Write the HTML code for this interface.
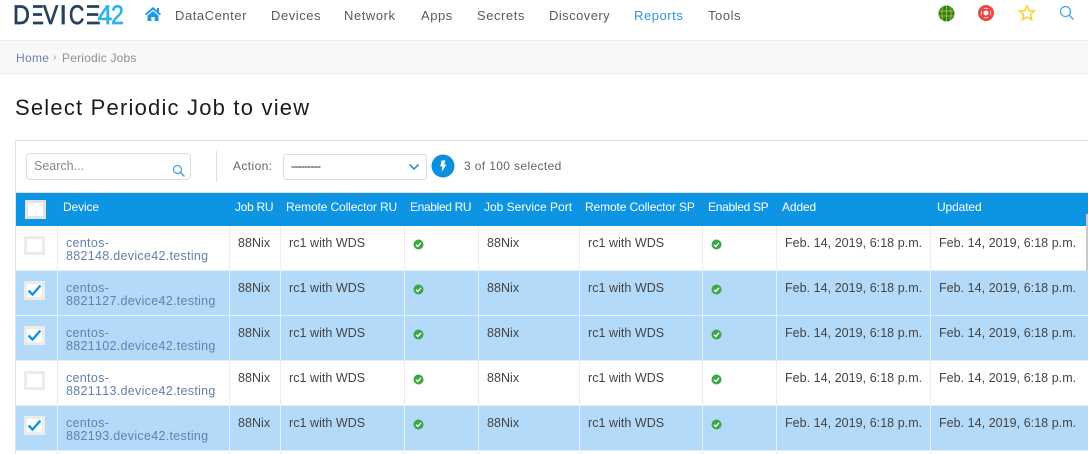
<!DOCTYPE html>
<html><head><meta charset="utf-8">
<style>
html,body{margin:0;padding:0;background:#fff;width:1088px;height:454px;overflow:hidden}
body{position:relative;font-family:"Liberation Sans",sans-serif;color:#444}
.a{position:absolute;white-space:nowrap}
.nav{top:8px;font-size:13px;line-height:15px;color:#5a5a5a;letter-spacing:.55px}
.l{position:absolute;top:0;font-size:26.5px;line-height:30px;color:#24425f;transform-origin:0 0;-webkit-text-stroke:.7px currentColor}
.w{position:absolute;top:2px;height:25px;background:#fff}
table{position:absolute;left:16px;top:193px;border-collapse:separate;border-spacing:0;table-layout:fixed;width:1072px;font-size:12.5px;font-kerning:none}
th{height:33px;padding:0 0 6px 6px;background:#0d95e3;color:#fff;font-weight:normal;text-align:left;font-size:12px;box-sizing:border-box;vertical-align:middle;white-space:nowrap;letter-spacing:-.12px}
td{height:45px;box-sizing:border-box;border-left:1px solid #ececec;border-bottom:1px solid #ececec;padding:11px 0 0 8px;vertical-align:top;line-height:13px;white-space:nowrap;letter-spacing:.04px}
tr.s td{background:#b3daf9;border-color:#e3eff9}
td:first-child{border-left:0;padding:0}
td.d{color:#6480ad;line-height:13px;letter-spacing:.3px}
.ok{display:block;margin-top:2px}
.v{position:absolute;top:451px;width:1px;height:3px;background:#ececec}
.cb{position:absolute;left:24px;width:15px;height:13px;border:3px solid #ececec;background:#fff}
</style></head><body>
<span class="l" style="left:28.400px;transform:scaleX(.9)">E</span>
<div class="w" style="left:29px;width:4px"></div>
<span class="l" style="left:13px;transform:scaleX(.88)">D</span>
<span class="l" style="left:43px;transform:scaleX(.86)">V</span>
<span class="l" style="left:59.500px">I</span>
<span class="l" style="left:80.900px;transform:scaleX(1.11)">E</span>
<div class="w" style="left:83px;width:3.500px"></div>
<span class="l" style="left:69px;transform:scaleX(.8)">C</span>
<span class="l" style="left:97.500px;color:#2cb5ea">4</span>
<span class="l" style="left:111.300px;color:#2cb5ea;transform:scaleX(.87)">2</span>
<svg class="a" style="left:145px;top:7px" width="16" height="14" viewBox="0 0 16 14"><path d="M8 0 L16 7 L14.800 8.400 L8 2.600 L1.200 8.400 L0 7 Z" fill="#2196e3"/><path d="M8 4 L13.500 8.600 V14 H9.700 V10 H6.300 V14 H2.500 V8.600 Z" fill="#2196e3"/><rect x="12" y="1" width="2" height="3.500" fill="#2196e3"/></svg>
<span class="a nav" style="left:175px">DataCenter</span>
<span class="a nav" style="left:271px">Devices</span>
<span class="a nav" style="left:344px">Network</span>
<span class="a nav" style="left:421px">Apps</span>
<span class="a nav" style="left:477px">Secrets</span>
<span class="a nav" style="left:549px;letter-spacing:.45px">Discovery</span>
<span class="a nav" style="left:634px;color:#2b97e0">Reports</span>
<span class="a nav" style="left:708px">Tools</span>
<svg class="a" style="left:938px;top:5px" width="17" height="17" viewBox="0 0 17 17"><circle cx="8.500" cy="8.500" r="8" fill="#0f8a2c"/><path d="M.5 6h16M.5 11h16M8.500.5v16M5 1.500c-1.500 4-1.500 10 0 14M12 1.500c1.500 4 1.500 10 0 14" stroke="#d8a51c" stroke-width="1" fill="none"/></svg>
<svg class="a" style="left:978px;top:5px" width="16" height="16" viewBox="0 0 16 16"><circle cx="8" cy="8" r="6.600" fill="none" stroke="#ee4444" stroke-width="2.800"/><circle cx="8" cy="8" r="3.500" fill="#fff" stroke="#ee4444" stroke-width="2"/><path d="M3.500 3.500L5.500 5.500M12.500 3.500L10.500 5.500M3.500 12.500L5.500 10.500M12.500 12.500L10.500 10.500" stroke="#ee4444" stroke-width="3"/></svg>
<svg class="a" style="left:1018px;top:4px" width="18" height="18" viewBox="0 0 18 18"><path d="M9 1.800L11.100 6.700L16.300 7.100L12.400 10.500L13.600 15.700L9 13L4.400 15.700L5.600 10.500L1.700 7.100L6.900 6.700Z" fill="none" stroke="#fbd431" stroke-width="1.600"/></svg>
<svg class="a" style="left:1059px;top:5px" width="16" height="16" viewBox="0 0 16 16"><circle cx="6.500" cy="6.500" r="5" fill="none" stroke="#4aa6ea" stroke-width="1.300"/><path d="M10 10L14.500 14.500" stroke="#4aa6ea" stroke-width="1.500"/></svg>

<div class="a" style="left:0;top:40px;width:1088px;height:34px;background:#f8f8f8;border-top:1px solid #ececec;border-bottom:1px solid #ececec;box-sizing:border-box"></div>
<div class="a" style="left:16px;top:51px;font-size:12px;line-height:14px;color:#6b7fae;letter-spacing:.3px">Home</div>
<div class="a" style="left:53px;top:51px;font-size:10px;line-height:14px;color:#999">›</div>
<div class="a" style="left:62px;top:51px;font-size:12px;line-height:14px;color:#8f8f8f;letter-spacing:.2px">Periodic Jobs</div>
<div class="a" style="left:15px;top:95px;font-size:22px;line-height:26px;color:#1c1c1c;letter-spacing:1.200px">Select Periodic Job to view</div>

<div class="a" style="left:15px;top:140px;width:1073px;height:314px;border-left:1px solid #e2e2e2;border-top:1px solid #e2e2e2;box-sizing:border-box"></div>
<div class="a" style="left:16px;top:192px;width:1072px;height:1px;background:#e2e2e2"></div>
<div class="a" style="left:26px;top:153px;width:165px;height:27px;border:1px solid #dcdcdc;border-radius:4px;box-sizing:border-box"></div>
<div class="a" style="left:34px;top:159px;font-size:12.500px;line-height:15px;color:#888;letter-spacing:0">Search...</div>
<svg class="a" style="left:172px;top:164px" width="14" height="14" viewBox="0 0 14 14"><circle cx="5.500" cy="5.500" r="4" fill="none" stroke="#3d9fe6" stroke-width="1.200"/><path d="M8.500 8.500L12.500 12.500" stroke="#3d9fe6" stroke-width="1.400"/></svg>
<div class="a" style="left:216px;top:151px;width:1px;height:31px;background:#ddd"></div>
<div class="a" style="left:233px;top:159px;font-size:12px;line-height:14px;color:#666;letter-spacing:.4px">Action:</div>
<div class="a" style="left:283px;top:154px;width:144px;height:26px;border:1px solid #dcdcdc;border-radius:3px;box-sizing:border-box"></div>
<div class="a" style="left:291px;top:159px;font-size:12px;line-height:14px;color:#222;letter-spacing:-.75px">---------</div>
<svg class="a" style="left:408px;top:163px" width="12" height="8" viewBox="0 0 12 8"><path d="M1.500 1.500L6 6L10.500 1.500" fill="none" stroke="#2e92d8" stroke-width="1.600"/></svg>
<svg class="a" style="left:431px;top:154px" width="24" height="24" viewBox="0 0 24 24"><circle cx="12" cy="12" r="11.500" fill="#0d8fe0"/><path d="M10.500 6.500H14.500L13 10.500H15.500L10.500 18L11.500 12.500H9.300Z" fill="#fff"/></svg>
<div class="a" style="left:464px;top:159px;font-size:12px;line-height:14px;color:#666;letter-spacing:.37px">3 of 100 selected</div>

<table>
<colgroup><col style="width:41px"><col style="width:172px"><col style="width:51px"><col style="width:124px"><col style="width:74px"><col style="width:101px"><col style="width:123px"><col style="width:74px"><col style="width:154px"><col style="width:158px"></colgroup>
<tr><th style="padding:0"></th><th>Device</th><th style="letter-spacing:-.3px">Job RU</th><th>Remote Collector RU</th><th style="letter-spacing:-.35px">Enabled RU</th><th style="letter-spacing:0">Job Service Port</th><th>Remote Collector SP</th><th style="letter-spacing:-.3px">Enabled SP</th><th>Added</th><th style="padding-left:7px">Updated</th></tr>
<tr><td></td><td class="d">centos-<br>882148.device42.testing</td><td>88Nix</td><td>rc1 with WDS</td><td><svg class="ok" width="11" height="11" viewBox="0 0 11 11"><circle cx="5.500" cy="5.500" r="5" fill="#3aa845"/><path d="M3 5.700L4.800 7.500L8 3.800" fill="none" stroke="#fff" stroke-width="1.400"/></svg></td><td>88Nix</td><td>rc1 with WDS</td><td><svg class="ok" width="11" height="11" viewBox="0 0 11 11"><circle cx="5.500" cy="5.500" r="5" fill="#3aa845"/><path d="M3 5.700L4.800 7.500L8 3.800" fill="none" stroke="#fff" stroke-width="1.400"/></svg></td><td>Feb. 14, 2019, 6:18 p.m.</td><td>Feb. 14, 2019, 6:18 p.m.</td></tr>
<tr class="s"><td></td><td class="d">centos-<br>8821127.device42.testing</td><td>88Nix</td><td>rc1 with WDS</td><td><svg class="ok" width="11" height="11" viewBox="0 0 11 11"><circle cx="5.500" cy="5.500" r="5" fill="#3aa845"/><path d="M3 5.700L4.800 7.500L8 3.800" fill="none" stroke="#fff" stroke-width="1.400"/></svg></td><td>88Nix</td><td>rc1 with WDS</td><td><svg class="ok" width="11" height="11" viewBox="0 0 11 11"><circle cx="5.500" cy="5.500" r="5" fill="#3aa845"/><path d="M3 5.700L4.800 7.500L8 3.800" fill="none" stroke="#fff" stroke-width="1.400"/></svg></td><td>Feb. 14, 2019, 6:18 p.m.</td><td>Feb. 14, 2019, 6:18 p.m.</td></tr>
<tr class="s"><td></td><td class="d">centos-<br>8821102.device42.testing</td><td>88Nix</td><td>rc1 with WDS</td><td><svg class="ok" width="11" height="11" viewBox="0 0 11 11"><circle cx="5.500" cy="5.500" r="5" fill="#3aa845"/><path d="M3 5.700L4.800 7.500L8 3.800" fill="none" stroke="#fff" stroke-width="1.400"/></svg></td><td>88Nix</td><td>rc1 with WDS</td><td><svg class="ok" width="11" height="11" viewBox="0 0 11 11"><circle cx="5.500" cy="5.500" r="5" fill="#3aa845"/><path d="M3 5.700L4.800 7.500L8 3.800" fill="none" stroke="#fff" stroke-width="1.400"/></svg></td><td>Feb. 14, 2019, 6:18 p.m.</td><td>Feb. 14, 2019, 6:18 p.m.</td></tr>
<tr><td></td><td class="d">centos-<br>8821113.device42.testing</td><td>88Nix</td><td>rc1 with WDS</td><td><svg class="ok" width="11" height="11" viewBox="0 0 11 11"><circle cx="5.500" cy="5.500" r="5" fill="#3aa845"/><path d="M3 5.700L4.800 7.500L8 3.800" fill="none" stroke="#fff" stroke-width="1.400"/></svg></td><td>88Nix</td><td>rc1 with WDS</td><td><svg class="ok" width="11" height="11" viewBox="0 0 11 11"><circle cx="5.500" cy="5.500" r="5" fill="#3aa845"/><path d="M3 5.700L4.800 7.500L8 3.800" fill="none" stroke="#fff" stroke-width="1.400"/></svg></td><td>Feb. 14, 2019, 6:18 p.m.</td><td>Feb. 14, 2019, 6:18 p.m.</td></tr>
<tr class="s"><td></td><td class="d">centos-<br>882193.device42.testing</td><td>88Nix</td><td>rc1 with WDS</td><td><svg class="ok" width="11" height="11" viewBox="0 0 11 11"><circle cx="5.500" cy="5.500" r="5" fill="#3aa845"/><path d="M3 5.700L4.800 7.500L8 3.800" fill="none" stroke="#fff" stroke-width="1.400"/></svg></td><td>88Nix</td><td>rc1 with WDS</td><td><svg class="ok" width="11" height="11" viewBox="0 0 11 11"><circle cx="5.500" cy="5.500" r="5" fill="#3aa845"/><path d="M3 5.700L4.800 7.500L8 3.800" fill="none" stroke="#fff" stroke-width="1.400"/></svg></td><td>Feb. 14, 2019, 6:18 p.m.</td><td>Feb. 14, 2019, 6:18 p.m.</td></tr>
</table>

<div class="v" style="left:57px"></div>
<div class="v" style="left:229px"></div>
<div class="v" style="left:280px"></div>
<div class="v" style="left:404px"></div>
<div class="v" style="left:478px"></div>
<div class="v" style="left:579px"></div>
<div class="v" style="left:702px"></div>
<div class="v" style="left:776px"></div>
<div class="v" style="left:930px"></div>
<div class="a" style="left:1086px;top:214px;width:2px;height:57px;background:#c9c9c9"></div>

<div class="cb" style="left:25px;top:200px;border-color:#e4e4e4"></div>
<div class="cb" style="top:236px"></div>
<div class="cb" style="top:281px"></div>
<div class="cb" style="top:326px"></div>
<div class="cb" style="top:371px"></div>
<div class="cb" style="top:416px"></div>
<svg class="a" style="left:27px;top:283px" width="15" height="15" viewBox="0 0 15 15"><path d="M1.500 7.500L5.500 11.500L13.500 2.500" fill="none" stroke="#0d95e3" stroke-width="2.400"/></svg>
<svg class="a" style="left:27px;top:328px" width="15" height="15" viewBox="0 0 15 15"><path d="M1.500 7.500L5.500 11.500L13.500 2.500" fill="none" stroke="#0d95e3" stroke-width="2.400"/></svg>
<svg class="a" style="left:27px;top:418px" width="15" height="15" viewBox="0 0 15 15"><path d="M1.500 7.500L5.500 11.500L13.500 2.500" fill="none" stroke="#0d95e3" stroke-width="2.400"/></svg>
</body></html>
